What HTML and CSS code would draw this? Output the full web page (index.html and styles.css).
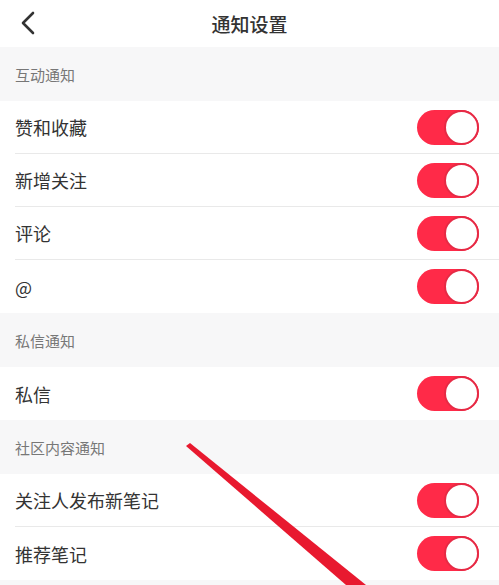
FILE: index.html
```html
<!DOCTYPE html>
<html>
	<head>
		<meta charset='utf8'>
		<title>通知设置</title>
		<link rel="stylesheet" href="styles.css">
	</head>
	<body>
		<div class="page">
			<div class="topbar">
				<span class="back">
					<svg width="16" height="24" viewBox="0 0 16 24"><path d="M13 2 L3 12 L13 22" fill="none" stroke="#333" stroke-width="2.6" stroke-linecap="round" stroke-linejoin="round"/></svg>
				</span>
				<div class="title">通知设置</div>
			</div>

			<div class="group_title">互动通知</div>
			<div class="row"><span>赞和收藏</span><i class="switch"></i></div>
			<div class="row"><span>新增关注</span><i class="switch"></i></div>
			<div class="row"><span>评论</span><i class="switch"></i></div>
			<div class="row last"><span>@</span><i class="switch"></i></div>

			<div class="group_title">私信通知</div>
			<div class="row last"><span>私信</span><i class="switch"></i></div>

			<div class="group_title">社区内容通知</div>
			<div class="row"><span>关注人发布新笔记</span><i class="switch"></i></div>
			<div class="row last"><span>推荐笔记</span><i class="switch"></i></div>
			<div class="group_title"></div>

			<!-- 红色标注箭头 -->
			<svg class="mark" width="499" height="585" viewBox="0 0 499 585"><polygon points="186,446 190,443 366,585 346,585" fill="#e8192f"/></svg>
		</div>
	</body>
</html>
```

FILE: styles.css
```css
body{
	margin:0;
	background:#fff;
	font-family:"Noto Sans CJK SC","Noto Sans",sans-serif;
}
.page{
	width:499px;
	height:585px;
	overflow:hidden;
	position:relative;
}
.topbar{
	height:47px;
	display:flex;
	align-items:center;
	justify-content:center;
	position:relative;
}
.topbar .back{
	position:absolute;
	left:20px;
	top:11px;
}
.title{
	font-size:19px;
	color:#333;
	font-weight:500;
	padding-left:0px;
}
.group_title{
	height:54px;
	background:#f7f7f8;
	color:#777;
	font-size:15px;
	display:flex;
	align-items:center;
	padding-left:15px;
}
.row{
	height:53px;
	display:flex;
	align-items:center;
	justify-content:space-between;
	margin-left:15px;
	padding-right:20px;
	border-bottom:1px solid #e9e9e9;
	box-sizing:border-box;
	font-size:18px;
	color:#333;
}
.row.last{
	border-bottom:none;
}
.switch{
	width:62px;
	height:35px;
	border-radius:18px;
	background:#ff2a48;
	position:relative;
	box-sizing:border-box;
}
.switch:after{
	content:'';
	position:absolute;
	right:0;
	top:0;
	width:35px;
	height:35px;
	border-radius:50%;
	background:#fff;
	border:2px solid #e62a45;
	box-sizing:border-box;
}
.mark{
	position:absolute;
	left:0;
	top:0;
	pointer-events:none;
}
```
